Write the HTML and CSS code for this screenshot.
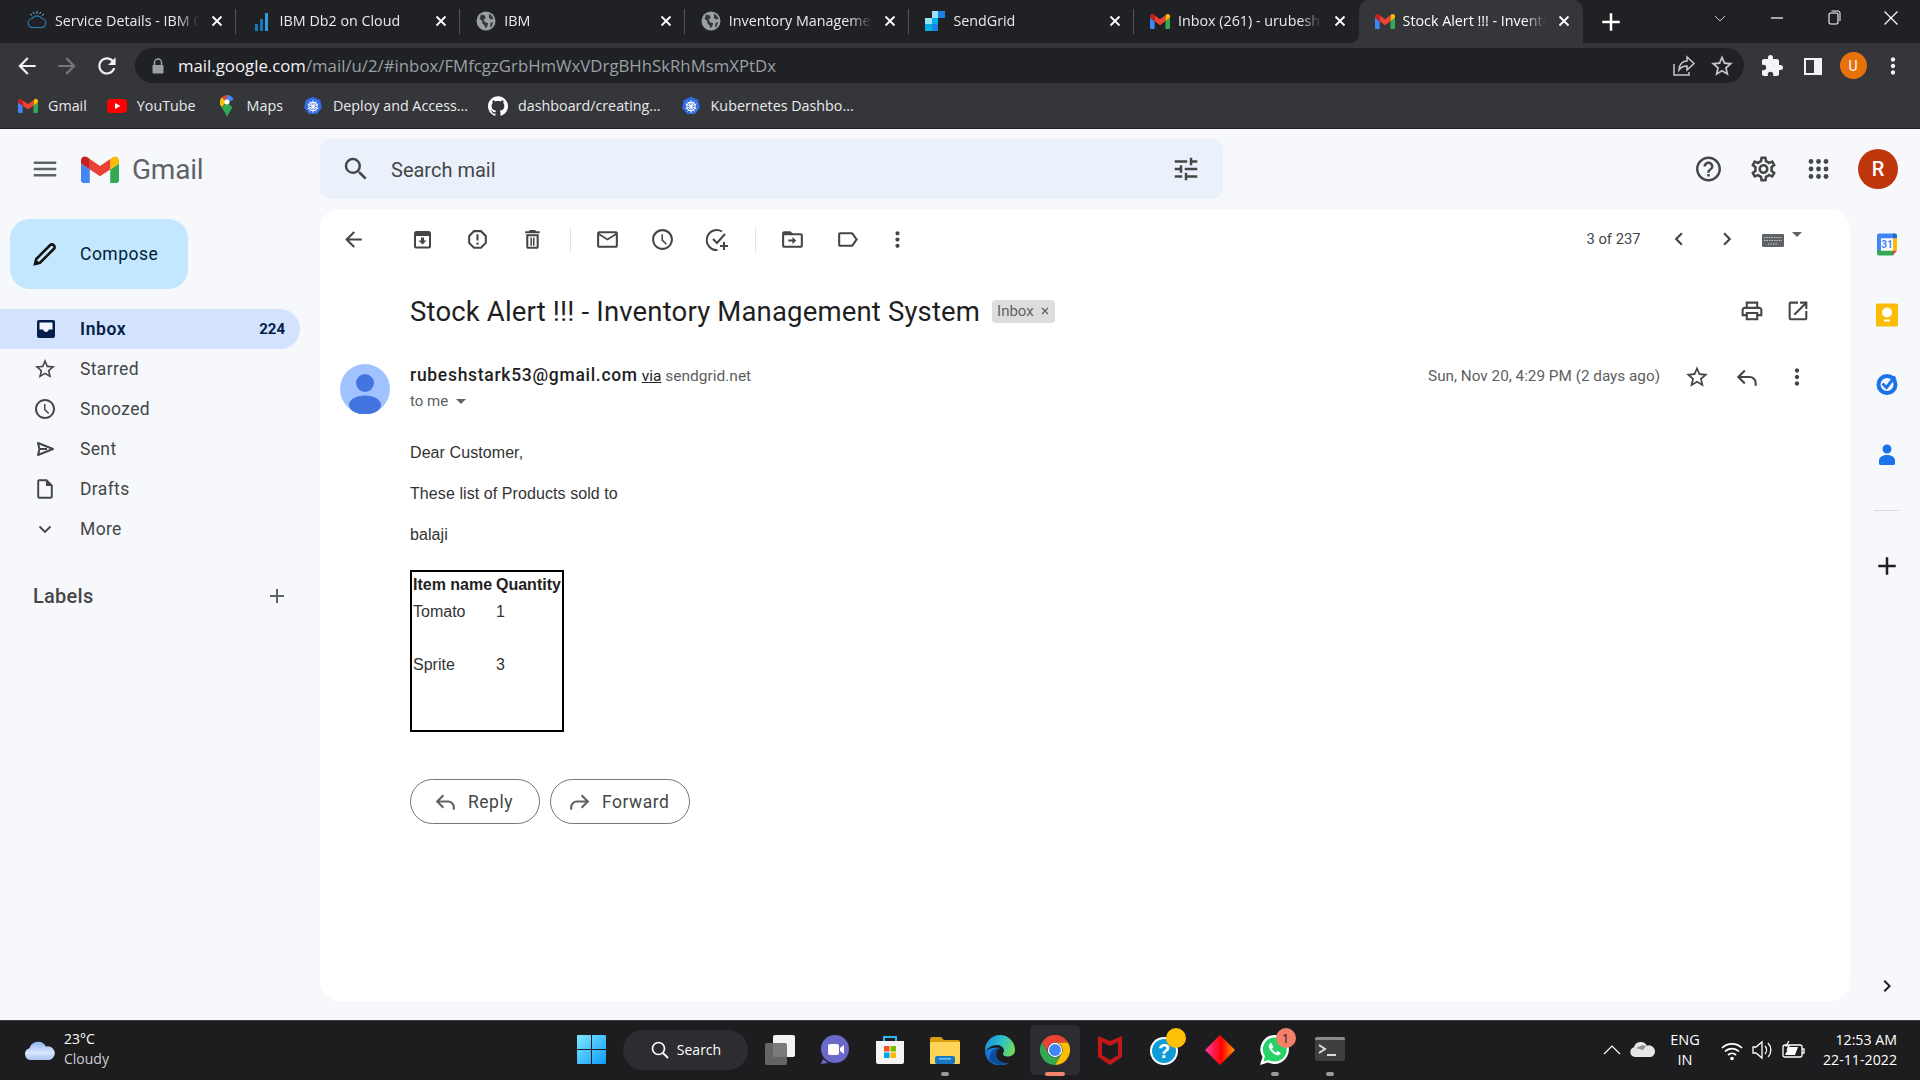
FILE: index.html
```html
<!DOCTYPE html>
<html lang="en">
<head>
<meta charset="utf-8">
<title>Stock Alert !!! - Inventory Management System</title>
<link rel="stylesheet" href="styles.css">
</head>
<body>
<svg class="defs" aria-hidden="true">
  <defs>
    <symbol id="m-logo" viewBox="0 0 52 42" preserveAspectRatio="none">
      <path fill="#4285f4" d="M3.6 42h8.4V21.6L0 12.6V38.4C0 40.4 1.6 42 3.6 42z"/>
      <path fill="#34a853" d="M40 42h8.4c2 0 3.6-1.6 3.6-3.6V12.6L40 21.6z"/>
      <path fill="#fbbc04" d="M40 6v15.6l12-9V7.8c0-4.4-5.1-7-8.6-4.3z"/>
      <path fill="#ea4335" d="M12 21.6V6l14 10.5L40 6v15.6L26 32z"/>
      <path fill="#c5221f" d="M0 7.8v4.8l12 9V6L8.6 3.5C5.1.8 0 3.4 0 7.8z"/>
    </symbol>
    <symbol id="close" viewBox="0 0 20 20"><path d="M5.5 5.5l9 9M14.5 5.5l-9 9" stroke="currentColor" stroke-width="1.8" fill="none"/></symbol>
    <symbol id="globe" viewBox="0 0 20 20"><circle cx="10" cy="10" r="9.5" fill="#9aa0a6"/><path fill="#35363a" d="M5 3.5l4 1 .5 2.5-2 2 2 2.5 2.5.5-.5 3-2 2.5-1-3-2-2-.5-3-2.5-1.500zM13 2.500l3 2.500 1.500 3-2.500.5-2-1.500zM14.500 12l2.500-1-1 4-2 1.500z"/></symbol>
    <symbol id="k8s" viewBox="0 0 24 24"><path fill="#326ce5" d="M12 .8l8.600 4.100 2.100 9.300-5.900 7.500H7.200l-5.900-7.500 2.100-9.300z"/><circle cx="12" cy="12.500" r="5" fill="none" stroke="#fff" stroke-width="1.300"/><path stroke="#fff" stroke-width="1.200" d="M12 5v15M5.500 9.500l13 6M18.500 9.500l-13 6M8 18.500l8-12M16 18.500l-8-12"/><circle cx="12" cy="12.500" r="1.400" fill="#fff"/></symbol>
    <symbol id="back" viewBox="0 0 24 24"><path fill="currentColor" d="M20 11H7.830l5.590-5.590L12 4l-8 8 8 8 1.410-1.410L7.830 13H20v-2z"/></symbol>
    <symbol id="forward" viewBox="0 0 24 24"><path fill="currentColor" d="M12 4l-1.410 1.410L16.170 11H4v2h12.170l-5.580 5.590L12 20l8-8z"/></symbol>
    <symbol id="star" viewBox="0 0 24 24"><path fill="currentColor" d="M22 9.240l-7.190-.62L12 2 9.190 8.630 2 9.240l5.460 4.730L5.820 21 12 17.270 18.180 21l-1.630-7.030L22 9.240zM12 15.400l-3.760 2.270 1-4.280-3.320-2.880 4.380-.38L12 6.100l1.710 4.040 4.380.38-3.320 2.880 1 4.280L12 15.400z"/></symbol>
    <symbol id="clock" viewBox="0 0 24 24"><path fill="currentColor" d="M11.990 2C6.470 2 2 6.480 2 12s4.470 10 9.990 10C17.520 22 22 17.520 22 12S17.520 2 11.990 2zM12 20c-4.420 0-8-3.580-8-8s3.580-8 8-8 8 3.580 8 8-3.580 8-8 8zm.500-13H11v6l4.250 4 1-1-3.750-3.670z"/></symbol>
    <symbol id="more" viewBox="0 0 24 24"><path fill="currentColor" d="M12 8c1.100 0 2-.9 2-2s-.9-2-2-2-2 .9-2 2 .9 2 2 2zm0 2c-1.100 0-2 .9-2 2s.9 2 2 2 2-.9 2-2-.9-2-2-2zm0 6c-1.100 0-2 .9-2 2s.9 2 2 2 2-.9 2-2-.9-2-2-2z"/></symbol>
    <symbol id="reply" viewBox="0 0 24 24"><path fill="none" stroke="currentColor" stroke-width="2" d="M10 6l-6 6 6 6M4 12h10.500a5.500 5.500 0 0 1 5.500 5.500V20"/></symbol>
    <symbol id="fwd" viewBox="0 0 24 24"><path fill="none" stroke="currentColor" stroke-width="2" d="M14 6l6 6-6 6M20 12H9.500A5.500 5.500 0 0 0 4 17.500V20"/></symbol>
    <symbol id="plus" viewBox="0 0 24 24"><path fill="currentColor" d="M19 13h-6v6h-2v-6H5v-2h6V5h2v6h6v2z"/></symbol>
  </defs>
</svg>

<div class="screen">
  <header class="tabstrip">
    <div class="tab">
      <svg class="tab-ico" viewBox="0 0 20 20"><path d="M5 7.500a6 6 0 0 1 10 0 4.500 4.500 0 0 1-1.500 9h-7A4.500 4.500 0 0 1 5 7.500z" fill="none" stroke="#2b7fb8" stroke-width="1.200"/><path d="M6 1l1.500 2M10 0v3M14 1l-1.500 2M3 3l2 1.500M17 3l-2 1.500" stroke="#5fb4e6" stroke-width="1"/></svg>
      <span class="tab-title">Service Details - IBM Cloud</span>
      <svg class="tab-close"><use href="#close"/></svg>
    </div>
    <div class="tab">
      <svg class="tab-ico" viewBox="0 0 20 20"><path fill="#1b75bb" d="M3 13h3v7H3zM8 8h3v12H8z"/><path fill="#2a9fd8" d="M13 2h3v18h-3z"/></svg>
      <span class="tab-title">IBM Db2 on Cloud</span>
      <svg class="tab-close"><use href="#close"/></svg>
    </div>
    <div class="tab">
      <svg class="tab-ico"><use href="#globe"/></svg>
      <span class="tab-title">IBM</span>
      <svg class="tab-close"><use href="#close"/></svg>
    </div>
    <div class="tab">
      <svg class="tab-ico"><use href="#globe"/></svg>
      <span class="tab-title">Inventory Management System</span>
      <svg class="tab-close"><use href="#close"/></svg>
    </div>
    <div class="tab">
      <svg class="tab-ico" viewBox="0 0 20 20"><path fill="#99e1f4" d="M0 7h7v6H0z"/><path fill="#1a82e2" d="M7 13h6v7H7zM13 0h7v7h-7z"/><path fill="#00b2e3" d="M7 7h6v6H7zM0 13h7v7H0z"/><path fill="#99e1f4" d="M7 0h6v7H7z"/></svg>
      <span class="tab-title">SendGrid</span>
      <svg class="tab-close"><use href="#close"/></svg>
    </div>
    <div class="tab before-active">
      <svg class="tab-ico tab-m"><use href="#m-logo"/></svg>
      <span class="tab-title">Inbox (261) - urubesh@gmail.com</span>
      <svg class="tab-close"><use href="#close"/></svg>
    </div>
    <div class="tab active">
      <svg class="tab-ico tab-m"><use href="#m-logo"/></svg>
      <span class="tab-title">Stock Alert !!! - Inventory Management</span>
      <svg class="tab-close"><use href="#close"/></svg>
    </div>
    <svg class="newtab"><use href="#plus"/></svg>
    <div class="winctl">
      <svg class="win-btn" viewBox="0 0 20 20"><path d="M5 8l5 5 5-5" fill="none" stroke="#c8c8c8" stroke-width="1"/></svg>
      <svg class="win-btn" viewBox="0 0 20 20"><path d="M4 10h12" stroke="#fff" stroke-width="1.200"/></svg>
      <svg class="win-btn" viewBox="0 0 20 20"><rect x="5" y="5" width="9" height="11" rx="1.500" fill="none" stroke="#fff" stroke-width="1.100"/><path d="M7.500 3H14a2 2 0 0 1 2 2v8" fill="none" stroke="#fff" stroke-width="1"/></svg>
      <svg class="win-btn" viewBox="0 0 20 20"><path d="M3.500 3.500l13 13M16.500 3.500l-13 13" stroke="#fff" stroke-width="1.200"/></svg>
    </div>
  </header>

  <nav class="toolbar">
    <svg class="tb-slot tb-white"><use href="#back" x="7" y="7" width="26" height="26"/></svg>
    <svg class="tb-slot tb-dim"><use href="#forward" x="7" y="7" width="26" height="26"/></svg>
    <svg class="tb-slot tb-white" viewBox="0 0 40 40"><path transform="translate(7 7) scale(1.080)" fill="currentColor" d="M17.650 6.350C16.200 4.900 14.210 4 12 4c-4.420 0-7.990 3.580-7.990 8s3.570 8 7.990 8c3.730 0 6.840-2.550 7.730-6h-2.080c-.82 2.330-3.040 4-5.650 4-3.310 0-6-2.690-6-6s2.690-6 6-6c1.660 0 3.140.69 4.220 1.780L13 11h7V4l-2.350 2.350z"/></svg>
    <div class="omnibox">
      <svg class="lock" viewBox="0 0 14 16"><path d="M3.500 7V4.500a3.500 3.500 0 0 1 7 0V7" fill="none" stroke="#9aa0a6" stroke-width="1.500"/><rect x="1.500" y="7" width="11" height="8.500" rx="1.200" fill="#9aa0a6"/></svg>
      <div class="url"><span class="url-host">mail.google.com</span>/mail/u/2/#inbox/FMfcgzGrbHmWxVDrgBHhSkRhMsmXPtDx</div>
      <svg class="tb-slot tb-grey" viewBox="0 0 40 40"><path d="M12 18v11h15v-3M17 24c0-6 4-9 8-9v-4l7 6.500-7 6.500v-4c-3 0-6 1-8 4z" fill="none" stroke="currentColor" stroke-width="1.500"/></svg>
      <svg class="tb-slot tb-grey"><use href="#star" x="7" y="7" width="26" height="26"/></svg>
    </div>
    <div class="tb-right">
      <svg class="tb-slot tb-white" viewBox="0 0 40 40"><path fill="currentColor" d="M27.500 19H26v-4c0-1.100-.9-2-2-2h-4v-1.500a2.500 2.500 0 0 0-5 0V13h-4c-1.100 0-2 .9-2 2v3.800h1.500a2.700 2.700 0 0 1 0 5.400H9V28c0 1.100.9 2 2 2h3.800v-1.500a2.700 2.700 0 0 1 5.400 0V30H24c1.100 0 2-.9 2-2v-4h1.500a2.500 2.500 0 0 0 0-5z"/></svg>
      <svg class="tb-slot tb-white" viewBox="0 0 40 40"><path fill="currentColor" fill-rule="evenodd" d="M11 12h18v17H11zM13 14v13h8V14z"/></svg>
      <div class="tb-avatar-slot"><div class="profile">U</div></div>
      <svg class="tb-slot tb-white"><use href="#more" x="7" y="7" width="26" height="26"/></svg>
    </div>
  </nav>

  <div class="bookmarks">
    <div class="bm"><svg class="bm-m"><use href="#m-logo"/></svg>Gmail</div>
    <div class="bm"><svg class="bm-ico" viewBox="0 0 20 20"><rect y="3" width="20" height="14" rx="4" fill="#f00"/><path d="M8 7l5.500 3L8 13z" fill="#fff"/></svg>YouTube</div>
    <div class="bm"><svg class="bm-pin" viewBox="0 0 14 22"><path fill="#34a853" d="M7 22C5.500 18 3 15 1.500 12L7 8l5.500 4C11 15 8.500 18 7 22z"/><path fill="#4285f4" d="M1 5L7 0a7 7 0 0 1 6.500 4.500L7 8z"/><path fill="#ea4335" d="M7 0A7 7 0 0 0 1.600 2.600L3.500 6 7 3z"/><path fill="#fbbc04" d="M1.600 2.600A7 7 0 0 0 1.500 12L7 7z"/><circle cx="7" cy="7" r="2.500" fill="#fff"/></svg>Maps</div>
    <div class="bm"><svg class="bm-ico"><use href="#k8s" width="20" height="20"/></svg>Deploy and Access...</div>
    <div class="bm"><svg class="bm-ico" viewBox="0 0 24 24"><path fill="#fff" d="M12 .297c-6.630 0-12 5.373-12 12 0 5.303 3.438 9.800 8.205 11.385.6.113.82-.258.82-.577 0-.285-.01-1.040-.015-2.040-3.338.724-4.042-1.610-4.042-1.610C4.422 18.070 3.633 17.700 3.633 17.700c-1.087-.744.084-.729.084-.729 1.205.084 1.838 1.236 1.838 1.236 1.070 1.835 2.809 1.305 3.495.998.108-.776.417-1.305.76-1.605-2.665-.3-5.466-1.332-5.466-5.930 0-1.310.465-2.380 1.235-3.220-.135-.303-.54-1.523.105-3.176 0 0 1.005-.322 3.300 1.230.96-.267 1.980-.399 3-.405 1.020.006 2.040.138 3 .405 2.280-1.552 3.285-1.230 3.285-1.230.645 1.653.24 2.873.12 3.176.765.84 1.230 1.910 1.230 3.220 0 4.610-2.805 5.625-5.475 5.920.42.36.81 1.096.81 2.220 0 1.606-.015 2.896-.015 3.286 0 .315.21.69.825.57C20.565 22.092 24 17.592 24 12.297c0-6.627-5.373-12-12-12"/></svg>dashboard/creating...</div>
    <div class="bm"><svg class="bm-ico"><use href="#k8s" width="20" height="20"/></svg>Kubernetes Dashbo...</div>
  </div>

  <div class="app">
    <aside class="sidebar">
      <div class="brand">
        <svg class="ico30 c-grey" viewBox="0 0 24 24"><path fill="currentColor" d="M3 18h18v-2H3v2zm0-5h18v-2H3v2zm0-7v2h18V6H3z"/></svg>
        <svg class="brand-m"><use href="#m-logo"/></svg>
        <span class="brand-name">Gmail</span>
      </div>
      <button class="compose">
        <svg class="ico30" viewBox="0 0 24 24"><path fill="none" stroke="#111" stroke-width="2" d="M4 20l1-4L16 5c1-1 2-1 3 0s1 2 0 3L8 19z"/><path d="M3.500 20.500l1-4.500 3.500 3.500z" fill="#111"/></svg>
        Compose
      </button>
      <ul class="navlist">
        <li class="navrow current">
          <svg class="ico30" viewBox="0 0 30 30"><rect x="7" y="6" width="18" height="18" rx="2" fill="#041e49"/><path fill="#f2f6fe" d="M9.500 8.500h13v7h-3.800c-.2 1.400-1.300 2.500-2.700 2.500s-2.500-1.100-2.700-2.500H9.500z"/></svg>
          <span class="navlabel">Inbox</span><span class="navcount">224</span>
        </li>
        <li class="navrow"><svg class="ico30"><use href="#star" x="3" y="3" width="24" height="24"/></svg><span class="navlabel">Starred</span></li>
        <li class="navrow"><svg class="ico30"><use href="#clock" x="3" y="3" width="24" height="24"/></svg><span class="navlabel">Snoozed</span></li>
        <li class="navrow"><svg class="ico30" viewBox="0 0 30 30"><path fill="none" stroke="currentColor" stroke-width="2" stroke-linejoin="round" d="M8 9l15 6-15 6 1.500-6zM9.500 15H17"/></svg><span class="navlabel">Sent</span></li>
        <li class="navrow"><svg class="ico30" viewBox="0 0 24 24"><path fill="currentColor" transform="translate(2.700 2.700) scale(.775)" d="M14 2H6c-1.100 0-1.990.9-1.990 2L4 20c0 1.100.89 2 1.990 2H18c1.100 0 2-.9 2-2V8l-6-6zM6 20V4h7v5h5v11H6z"/></svg><span class="navlabel">Drafts</span></li>
        <li class="navrow"><svg class="ico30" viewBox="0 0 30 30"><path fill="none" stroke="currentColor" stroke-width="1.800" d="M9.500 12.500l5.500 5.500 5.500-5.500"/></svg><span class="navlabel">More</span></li>
      </ul>
      <div class="labels"><span>Labels</span><svg class="ico30 c-grey"><use href="#plus" x="3" y="3" width="24" height="24"/></svg></div>
    </aside>

    <div class="content">
      <div class="topbar">
        <div class="search">
          <svg class="ico30 c-dark" viewBox="0 0 24 24"><path fill="currentColor" d="M15.500 14h-.79l-.28-.27A6.471 6.471 0 0 0 16 9.500 6.500 6.500 0 1 0 9.500 16c1.610 0 3.090-.59 4.230-1.570l.27.28v.79l5 4.990L20.490 19l-4.990-5zm-6 0C7.010 14 5 11.990 5 9.500S7.010 5 9.500 5 14 7.010 14 9.500 11.990 14 9.500 14z"/></svg>
          <span class="search-text">Search mail</span>
          <svg class="ico30 c-dark tune" viewBox="0 0 24 24"><path fill="currentColor" d="M3 17v2h6v-2H3zM3 5v2h10V5H3zm10 16v-2h8v-2h-8v-2h-2v6h2zM7 9v2H3v2h4v2h2V9H7zm14 4v-2H11v2h10zm-6-4h2V7h4V5h-4V3h-2v6z"/></svg>
        </div>
        <div class="top-actions">
          <svg class="slot55 c-grey" viewBox="0 0 55 30"><path transform="translate(12.500 0) scale(1.250)" fill="currentColor" d="M11 18h2v-2h-2v2zm1-16C6.480 2 2 6.480 2 12s4.480 10 10 10 10-4.480 10-10S17.520 2 12 2zm0 18c-4.410 0-8-3.590-8-8s3.590-8 8-8 8 3.590 8 8-3.590 8-8 8zm0-14c-2.210 0-4 1.790-4 4h2c0-1.100.9-2 2-2s2 .9 2 2c0 2-3 1.750-3 5h2c0-2.250 3-2.500 3-5 0-2.210-1.790-4-4-4z"/></svg>
          <svg class="slot55 c-grey" viewBox="0 0 55 30"><path transform="translate(12.500 0) scale(1.250)" fill="currentColor" d="M19.430 12.980c.04-.32.07-.64.07-.98 0-.34-.03-.66-.07-.98l2.110-1.650c.19-.15.24-.42.12-.64l-2-3.460c-.09-.16-.26-.25-.44-.25-.06 0-.12.01-.17.03l-2.490 1c-.52-.4-1.080-.73-1.690-.98l-.38-2.650C14.460 2.180 14.250 2 14 2h-4c-.25 0-.46.18-.49.42l-.38 2.650c-.61.25-1.170.59-1.690.98l-2.490-1c-.06-.02-.12-.03-.18-.03-.17 0-.34.09-.43.25l-2 3.460c-.13.22-.07.49.12.64l2.110 1.650c-.04.32-.07.65-.07.98 0 .33.03.66.07.98l-2.110 1.650c-.19.15-.24.42-.12.64l2 3.460c.09.16.26.25.44.25.06 0 .12-.01.17-.03l2.490-1c.52.4 1.080.73 1.690.98l.38 2.650c.03.24.24.42.49.42h4c.25 0 .46-.18.49-.42l.38-2.650c.61-.25 1.170-.59 1.690-.98l2.490 1c.06.02.12.03.18.03.17 0 .34-.09.43-.25l2-3.460c.12-.22.07-.49-.12-.64l-2.110-1.650zm-1.980-1.710c.04.31.05.52.05.73 0 .21-.02.43-.05.73l-.14 1.130.89.7 1.080.84-.7 1.210-1.270-.51-1.040-.42-.9.68c-.43.32-.84.56-1.250.73l-1.060.43-.16 1.130-.2 1.350h-1.400l-.19-1.350-.16-1.130-1.060-.43c-.43-.18-.83-.41-1.230-.71l-.91-.7-1.060.43-1.270.51-.7-1.210 1.080-.84.89-.7-.14-1.130c-.03-.31-.05-.54-.05-.74s.02-.43.05-.73l.14-1.130-.89-.7-1.080-.84.7-1.210 1.270.51 1.040.42.9-.68c.43-.32.84-.56 1.250-.73l1.060-.43.16-1.130.2-1.350h1.390l.19 1.350.16 1.130 1.060.43c.43.18.83.41 1.230.71l.91.7 1.060-.43 1.270-.51.7 1.210-1.070.85-.89.7.14 1.130zM12 8c-2.210 0-4 1.790-4 4s1.790 4 4 4 4-1.790 4-4-1.790-4-4-4zm0 6c-1.100 0-2-.9-2-2s.9-2 2-2 2 .9 2 2-.9 2-2 2z"/></svg>
          <svg class="slot55 c-grey" viewBox="0 0 55 30"><g fill="currentColor"><circle cx="20" cy="7.500" r="2.400"/><circle cx="27.500" cy="7.500" r="2.400"/><circle cx="35" cy="7.500" r="2.400"/><circle cx="20" cy="15" r="2.400"/><circle cx="27.500" cy="15" r="2.400"/><circle cx="35" cy="15" r="2.400"/><circle cx="20" cy="22.500" r="2.400"/><circle cx="27.500" cy="22.500" r="2.400"/><circle cx="35" cy="22.500" r="2.400"/></g></svg>
          <div class="account">R</div>
        </div>
      </div>

      <div class="below">
        <main class="card">
          <div class="mail-tools">
            <svg class="slot55 back-slot"><use href="#back" x="15" y="3" width="25" height="25"/></svg>
            <svg class="slot55 first-slot" viewBox="0 0 55 30"><path fill="currentColor" d="M19 12V9.500A2.500 2.500 0 0 1 21.500 7h12A2.500 2.500 0 0 1 36 9.500V12z"/><rect x="20" y="10" width="15" height="13.500" rx="1" fill="none" stroke="currentColor" stroke-width="2"/><path fill="currentColor" d="M26 13.500h3v3h2.500l-4 4-4-4H26z"/></svg>
            <svg class="slot55" viewBox="0 0 55 30"><path transform="translate(15 3) scale(1.040)" fill="currentColor" fill-rule="evenodd" d="M15.730 3H8.270L3 8.270v7.460L8.270 21h7.460L21 15.730V8.270L15.730 3zM19 14.900L14.900 19H9.100L5 14.900V9.100L9.100 5h5.800L19 9.100v5.800zM11 7h2v6h-2zM11 15h2v2h-2z"/></svg>
            <svg class="slot55" viewBox="0 0 55 30"><path transform="translate(15 3) scale(1.040)" fill="currentColor" d="M16 9v10H8V9h8m-1.500-6h-5l-1 1H5v2h14V4h-3.500l-1-1zM18 7H6v12c0 1.100.9 2 2 2h8c1.100 0 2-.9 2-2V7zM10 10h1.500v8H10zM12.500 10H14v8h-1.500z"/></svg>
            <span class="tool-sep"></span>
            <svg class="slot55" viewBox="0 0 55 30"><path transform="translate(15 3) scale(1.040)" fill="currentColor" d="M20 4H4c-1.100 0-1.990.9-1.990 2L2 18c0 1.100.9 2 2 2h16c1.100 0 2-.9 2-2V6c0-1.100-.9-2-2-2zm0 14H4V8l8 5 8-5v10zm-8-7L4 6h16l-8 5z"/></svg>
            <svg class="slot55"><use href="#clock" x="15" y="3" width="25" height="25"/></svg>
            <svg class="slot55" viewBox="0 0 55 30"><g transform="translate(15 3)" fill="none" stroke="currentColor" stroke-width="2"><path d="M17 4.500A10 10 0 1 0 12.500 23"/><path d="M8 12l4 4 8-9M19 15v8M15 19h8"/></g></svg>
            <span class="tool-sep"></span>
            <svg class="slot55" viewBox="0 0 55 30"><path transform="translate(15 3) scale(1.040)" fill="currentColor" d="M20 6h-8l-2-2H4c-1.100 0-2 .9-2 2v12c0 1.100.9 2 2 2h16c1.100 0 2-.9 2-2V8c0-1.100-.9-2-2-2zm0 12H4V8h16v10zM12 9.500l3.500 3.500-3.500 3.500V14H8v-2h4z"/></svg>
            <svg class="slot55" viewBox="0 0 55 30"><path transform="translate(15 3) scale(1.040)" fill="currentColor" d="M17.630 5.840C17.270 5.330 16.670 5 16 5L5 5.010C3.900 5.010 3 5.900 3 7v10c0 1.100.9 1.990 2 1.990L16 19c.67 0 1.270-.33 1.630-.84L22 12l-4.370-6.160zM16 17H5V7h11l3.550 5L16 17z"/></svg>
            <svg class="slot45"><use href="#more" x="10" y="3" width="25" height="25"/></svg>
            <div class="pager">
              <span class="pager-text">3 of 237</span>
              <svg class="slot48" viewBox="0 0 48 30"><path transform="translate(11 2) scale(1.080)" fill="currentColor" d="M15.410 7.410L14 6l-6 6 6 6 1.410-1.410L10.830 12z"/></svg>
              <svg class="slot48" viewBox="0 0 48 30"><path transform="translate(11 2) scale(1.080)" fill="currentColor" d="M10 6L8.590 7.410 13.170 12l-4.580 4.590L10 18l6-6z"/></svg>
              <svg class="kbd" viewBox="0 0 46 30"><rect x="1" y="10" width="22" height="13" rx="1" fill="#5f6368"/><path d="M3 13.500h18M3 16.500h18M7 20h10" stroke="#c4c7c5" stroke-width="1.200" stroke-dasharray="1.500 1"/><path d="M31 8h10l-5 5z" fill="#5f6368"/></svg>
            </div>
          </div>

          <div class="subject-row">
            <h1 class="subject">Stock Alert !!! - Inventory Management System</h1>
            <span class="chip">Inbox<svg class="chip-x" viewBox="0 0 10 10"><path d="M2 2l6 6M8 2l-6 6" stroke="#5f6368" stroke-width="1.300"/></svg></span>
            <div class="subject-actions">
              <svg class="slot46" viewBox="0 0 46 30"><path transform="translate(10.500 2.500) scale(1.040)" fill="currentColor" d="M19 8h-1V3H6v5H5c-1.660 0-3 1.340-3 3v6h4v4h12v-4h4v-6c0-1.660-1.340-3-3-3zM8 5h8v3H8V5zm8 12v2H8v-4h8v2zm2-2v-2H6v2H4v-4c0-.55.45-1 1-1h14c.55 0 1 .45 1 1v4h-2z"/></svg>
              <svg class="slot46" viewBox="0 0 46 30"><path transform="translate(10.500 2.500) scale(1.040)" fill="currentColor" d="M19 19H5V5h7V3H5a2 2 0 0 0-2 2v14a2 2 0 0 0 2 2h14c1.100 0 2-.9 2-2v-7h-2v7zM14 3v2h3.590l-9.830 9.830 1.410 1.410L19 6.410V10h2V3h-7z"/></svg>
            </div>
          </div>

          <div class="msg-head">
            <svg class="sender-pic" viewBox="0 0 50 50"><circle cx="25" cy="25" r="25" fill="#a0c3ff"/><circle cx="25" cy="19" r="9" fill="#4374e0"/><ellipse cx="25" cy="41" rx="16" ry="9.500" fill="#4374e0"/></svg>
            <div class="sender">
              <div class="sender-line"><b class="sender-name">rubeshstark53@gmail.com</b> <u class="via">via</u> <span class="via-host">sendgrid.net</span></div>
              <div class="to-line">to me<span class="to-caret"></span></div>
            </div>
            <div class="msg-meta">
              <span class="msg-date">Sun, Nov 20, 4:29 PM (2 days ago)</span>
              <svg class="slot50"><use href="#star" x="12" y="3" width="26" height="26"/></svg>
              <svg class="slot50"><use href="#reply" x="12" y="3" width="26" height="26"/></svg>
              <svg class="slot50"><use href="#more" x="12" y="3" width="26" height="26"/></svg>
            </div>
          </div>

          <div class="msg-body">
            <p>Dear Customer,</p>
            <p>These list of Products sold to</p>
            <p>balaji</p>
            <table class="items">
              <tr class="r-head"><th>Item name</th><th>Quantity</th></tr>
              <tr class="r-one"><td>Tomato</td><td>1</td></tr>
              <tr class="r-two"><td>Sprite</td><td>3</td></tr>
            </table>
            <div class="actions">
              <button class="pill pill-reply"><svg class="pill-ico"><use href="#reply" width="25" height="25"/></svg>Reply</button>
              <button class="pill pill-forward"><svg class="pill-ico"><use href="#fwd" width="25" height="25"/></svg>Forward</button>
            </div>
          </div>
        </main>

        <aside class="rail">
          <div class="rail-slot"><svg class="rail-ico" viewBox="0 0 24 24"><path fill="#4285f4" d="M2 3a2 2 0 0 1 2-2h15v5H6v16H4a2 2 0 0 1-2-2z"/><path fill="#1967d2" d="M18 1h2a2 2 0 0 1 2 2v3h-4z"/><path fill="#fbbc04" d="M18 6h4v12h-4z"/><path fill="#34a853" d="M6 18h12v5H4a2 2 0 0 1-2-2v-3z"/><path fill="#ea4335" d="M18 18h4l-4 5z"/><rect x="6" y="6" width="12" height="12" fill="#fff"/><text x="12" y="15.500" class="cal-num">31</text></svg></div>
          <div class="rail-slot"><svg class="rail-ico" viewBox="0 0 24 24"><rect x="1" y="1" width="22" height="23" rx="1.500" fill="#fbbc04"/><circle cx="12" cy="10" r="5" fill="#fff"/><path d="M9 17h6v2H9z" fill="#fff"/></svg></div>
          <div class="rail-slot"><svg class="rail-ico" viewBox="0 0 24 24"><circle cx="12" cy="12" r="8.500" fill="none" stroke="#1a73e8" stroke-width="4"/><path d="M7.500 11l4 4L20 4" fill="none" stroke="#1a73e8" stroke-width="3"/></svg></div>
          <div class="rail-slot"><svg class="rail-ico" viewBox="0 0 24 24"><circle cx="12" cy="6.500" r="4.500" fill="#1a73e8"/><path d="M4 21v-3c0-3 3-5.500 8-5.500s8 2.500 8 5.500v3c0 1-1 1.500-2 1.500H6c-1 0-2-.5-2-1.500z" fill="#1a73e8"/></svg></div>
          <span class="rail-sep"></span>
          <svg class="rail-plus"><use href="#plus" width="30" height="30"/></svg>
          <svg class="rail-chev" viewBox="0 0 24 24"><path fill="currentColor" d="M10 6L8.590 7.410 13.170 12l-4.580 4.590L10 18l6-6z"/></svg>
        </aside>
      </div>
    </div>
  </div>

  <footer class="taskbar">
    <div class="weather">
      <svg class="cloud" viewBox="0 0 32 24"><defs><linearGradient id="cl" x1="0" y1="0" x2="0" y2="1"><stop offset="0" stop-color="#8fb4ee"/><stop offset=".6" stop-color="#d9e6fb"/><stop offset="1" stop-color="#a9c5f2"/></linearGradient></defs><path fill="url(#cl)" d="M7 22a6 6 0 0 1-1.500-11.800A9 9 0 0 1 22 8.500 6.800 6.800 0 0 1 25.500 22z"/></svg>
      <div class="weather-text"><div>23°C</div><div class="weather-sub">Cloudy</div></div>
    </div>
    <div class="tasks">
      <svg class="winlogo" viewBox="0 0 29 29"><defs><linearGradient id="wl" x1="0" y1="0" x2="1" y2="1"><stop offset="0" stop-color="#7ee8ff"/><stop offset="1" stop-color="#0f9bff"/></linearGradient></defs><path fill="url(#wl)" d="M0 1a1 1 0 0 1 1-1h13v14H0zM15 0h13a1 1 0 0 1 1 1v13H15zM0 15h14v14H1a1 1 0 0 1-1-1zM15 15h14v13a1 1 0 0 1-1 1H15z"/></svg>
      <div class="task-search">
        <svg class="ts-ico" viewBox="0 0 20 20"><circle cx="8.500" cy="8.500" r="6" fill="none" stroke="#fff" stroke-width="1.700"/><path d="M13 13l5 5" stroke="#fff" stroke-width="1.900"/></svg>
        Search
      </div>
      <div class="app-slot"><svg class="app-ico" viewBox="0 0 30 30"><rect x="8" y="0" width="22" height="22" rx="2" fill="#f4f4f4"/><rect x="0" y="8" width="22" height="22" rx="2" fill="#6d6d6d" opacity=".9"/></svg></div>
      <div class="app-slot"><svg class="app-ico" viewBox="0 0 30 30"><circle cx="15" cy="14" r="14" fill="#6b69c9"/><path d="M3 24l-2 5 7-1z" fill="#6b69c9"/><rect x="8" y="9" width="11" height="11" rx="2" fill="#fff"/><path d="M20 13l4-3v9l-4-3z" fill="#fff"/></svg></div>
      <div class="app-slot"><svg class="app-ico" viewBox="0 0 30 30"><path d="M9 6V2h12v4" fill="none" stroke="#2ab8f2" stroke-width="2"/><path d="M1 6h28v21a2 2 0 0 1-2 2H3a2 2 0 0 1-2-2z" fill="#f4f4f4"/><path fill="#f25022" d="M9 11h5.500v5.500H9z"/><path fill="#7fba00" d="M15.500 11H21v5.500h-5.500z"/><path fill="#00a4ef" d="M9 17.500h5.500V23H9z"/><path fill="#ffb900" d="M15.500 17.500H21V23h-5.500z"/></svg></div>
      <div class="app-slot dot"><svg class="app-ico" viewBox="0 0 30 30"><path d="M0 4a2 2 0 0 1 2-2h9l3 3h14a2 2 0 0 1 2 2v3H0z" fill="#d99e0b"/><path d="M0 7h30v21a1 1 0 0 1-1 1H1a1 1 0 0 1-1-1z" fill="#ffd456"/><rect x="5" y="21" width="20" height="8" rx="2" fill="#1578c2"/><rect x="9" y="23" width="12" height="1.500" fill="#7fc4f0"/></svg></div>
      <div class="app-slot"><svg class="app-ico" viewBox="0 0 30 30"><defs><linearGradient id="eg" x1="0" y1=".3" x2="1" y2=".6"><stop offset="0" stop-color="#1b8fe0"/><stop offset=".55" stop-color="#2cc4c8"/><stop offset="1" stop-color="#74dc54"/></linearGradient></defs><path fill="url(#eg)" d="M15 0a15 15 0 0 1 15 15c0 4-3 6.500-7.500 6.500-2.500 0-4.500-.8-4.500-2.500 0-1 1-1.500 1-3.500 0-3-3-5.500-7-5.500-5 0-9.500 3-12 6A15 15 0 0 1 15 0z"/><path fill="#1976d2" d="M0 16a15 15 0 0 0 24 11.500c-7 2-13-2-13-8 0-3 1.500-5.500 4-6.500-7-1-12.500.5-15 3z"/><path fill="#0b4f9c" d="M4 24a15 15 0 0 0 20 3.500c-7 2-13-2-13-8 0-3 1.500-5.500 4-6.500-5 0-10 3-11 11z"/></svg></div>
      <div class="app-slot active-app"><svg class="app-ico" viewBox="0 0 48 48"><path fill="#ea4335" d="M3.200 12A24 24 0 0 1 44.800 12H24A12 12 0 0 0 13.600 30z"/><path fill="#fbbc04" d="M44.800 12A24 24 0 0 1 24 48L34.400 30A12 12 0 0 0 24 12z"/><path fill="#34a853" d="M24 48A24 24 0 0 1 3.200 12L13.600 30A12 12 0 0 0 34.400 30z"/><circle cx="24" cy="24" r="11.500" fill="#fff"/><circle cx="24" cy="24" r="9.500" fill="#4285f4"/></svg></div>
      <div class="app-slot"><svg class="app-ico" viewBox="0 0 30 30"><path fill="#c01818" fill-rule="evenodd" d="M3 1l12 5 12-5v21l-12 8-12-8zM7 7v13l8 5 8-5V7l-8 4z"/></svg></div>
      <div class="app-slot"><svg class="app-ico" viewBox="0 0 30 30"><circle cx="14" cy="16" r="14" fill="#fff"/><circle cx="14" cy="16" r="12" fill="#0f9bd7"/><text x="14" y="23" class="help-q">?</text></svg><span class="badge-yellow"></span></div>
      <div class="app-slot"><svg class="app-ico" viewBox="0 0 30 30"><defs><linearGradient id="dm" x1="0" y1="0" x2="1" y2="0"><stop offset="0" stop-color="#ff3ca6"/><stop offset=".55" stop-color="#f00"/><stop offset="1" stop-color="#ffa000"/></linearGradient></defs><path fill="url(#dm)" d="M15 0l15 15-15 15L0 15z"/></svg></div>
      <div class="app-slot dot"><svg class="app-ico" viewBox="0 0 30 30"><path fill="#fff" d="M15 0a14.500 14.500 0 0 0-12.500 22L0 30l8-2.500A14.500 14.500 0 1 0 15 0z"/><path fill="#25d366" d="M15 2.500a12 12 0 0 0-10 18.700L3.500 26.500l5.400-1.500A12 12 0 1 0 15 2.500z"/><path fill="#fff" d="M10.500 8c-1 .3-2 2-1.700 3.800.5 3 4.500 7.500 8 8.500 2 .5 3.700-1 4-2.300l-3.300-2-1.500 1.500c-1.500-.5-3.500-2.500-4-4l1.300-1.500L11.500 8z"/></svg><span class="badge-red">1</span></div>
      <div class="app-slot dot"><svg class="app-ico" viewBox="0 0 30 30"><rect y="2" width="30" height="24" rx="2" fill="#3f3f3f"/><path d="M0 4a2 2 0 0 1 2-2h26a2 2 0 0 1 2 2v1H0z" fill="#8a8a8a"/><path d="M4 10l6 4-6 4" fill="none" stroke="#ddd" stroke-width="2"/><path d="M12 19h9v2h-9z" fill="#ddd"/></svg></div>
    </div>
    <div class="tray">
      <svg class="tray-slot" viewBox="0 0 30 30"><path d="M7 19l8-8 8 8" fill="none" stroke="#fff" stroke-width="1.200"/></svg>
      <svg class="tray-slot" viewBox="0 0 30 30"><path fill="#e6e6e6" d="M8 22a5 5 0 0 1-1-9.800 7 7 0 0 1 13-1.500A5.800 5.800 0 0 1 24 22z"/><path fill="#8f8f8f" d="M9 13l7-3 3 1-3 4z"/></svg>
      <div class="lang"><div>ENG</div><div>IN</div></div>
      <svg class="tray-slot wifi" viewBox="0 0 30 30"><g fill="none" stroke="#fff" stroke-width="1.700"><path d="M5 13a14 14 0 0 1 20 0M8 16.500a10 10 0 0 1 14 0M11 20a6 6 0 0 1 8 0"/></g><circle cx="15" cy="23.500" r="1.800" fill="#fff"/></svg>
      <svg class="tray-slot" viewBox="0 0 30 30"><g fill="none" stroke="#fff" stroke-width="1.300"><path d="M6 12v6h3l6 5V7l-6 5z"/><path d="M18 11a6 6 0 0 1 0 8M21 8a10 10 0 0 1 0 14"/></g></svg>
      <svg class="tray-slot" viewBox="0 0 30 30"><g fill="none" stroke="#fff" stroke-width="1.300"><rect x="6" y="10" width="19" height="12" rx="2"/><path d="M25 14h2v4h-2"/></g><path d="M8 20l4-8h9l-3 8z" fill="#fff"/><path d="M12 6l-3 5h3l-2 4" fill="none" stroke="#fff" stroke-width="1.200"/></svg>
      <div class="clock"><div>12:53 AM</div><div>22-11-2022</div></div>
    </div>
  </footer>
</div>
</body>
</html>
```

FILE: styles.css
```css
* { box-sizing: border-box; }
html, body { margin: 0; padding: 0; height: 100%; }
body { font-family: Roboto, "Liberation Sans", sans-serif; background: #f6f8fc; overflow: hidden; }
.defs { width: 0; height: 0; position: absolute; }
.screen { width: 1920px; height: 1080px; display: flex; flex-direction: column; overflow: hidden; }

/* Browser tabs */
.tabstrip { height: 43px; background: #202124; display: flex; padding-left: 11px; color: #fff; flex: none; }
.tab { width: 224.6px; height: 43px; flex: none; display: flex; align-items: center; padding: 0 9px 2px 16px; gap: 8px; position: relative; font-family: "Open Sans", sans-serif; font-size: 14.300px; color: #e8eaed; }
.tab::after { content: ""; position: absolute; right: 0; top: 9px; height: 25px; width: 1px; background: #55565a; }
.tab.before-active::after, .tab.active::after { display: none; }
.tab.active { background: #35363a; border-radius: 10px 10px 0 0; color: #fff; }
.tab.active::before { content: ""; position: absolute; left: -10px; bottom: 0; width: 10px; height: 10px; background: radial-gradient(circle at 0 0, transparent 10px, #35363a 10.5px); }
.tab-ico { width: 20px; height: 20px; flex: none; }
.tab-m { height: 16px; }
.tab-title { flex: 1; min-width: 0; white-space: nowrap; overflow: hidden; -webkit-mask-image: linear-gradient(to left, transparent 0, #000 22px); mask-image: linear-gradient(to left, transparent 0, #000 22px); }
.tab-close { width: 20px; height: 20px; flex: none; color: #fff; }
.newtab { width: 30px; height: 30px; color: #fff; margin: 7px 0 0 13px; flex: none; }
.winctl { margin-left: auto; display: flex; padding-right: 1px; align-items: flex-start; }
.win-btn { width: 20px; height: 20px; margin: 8px 18.500px 0; flex: none; }

/* Browser toolbar */
.toolbar { height: 40px; background: #35363a; display: flex; padding: 5px 7px 0; flex: none; align-items: flex-start; }
.tb-slot { width: 40px; height: 35px; flex: none; }
.toolbar > .tb-slot, .tb-right .tb-slot { height: 40px; margin-top: -2px; }
.tb-white { color: #f1f3f4; }
.tb-dim { color: #75777b; }
.tb-grey { color: #c4c7c5; }
.omnibox { flex: 1; height: 35px; margin-left: 8px; background: #202124; border-radius: 18px; display: flex; align-items: center; padding: 0 2px 0 16px; }
.omnibox .tb-slot { height: 40px; }
.lock { width: 14px; height: 16px; flex: none; margin-right: 13px; }
.url { flex: 1; font-family: "Open Sans", sans-serif; font-size: 16.800px; color: #9aa0a6; white-space: nowrap; }
.url-host { color: #f1f3f4; }
.tb-right { display: flex; margin-left: 9px; }
.tb-avatar-slot { width: 40px; height: 35px; display: flex; align-items: center; justify-content: center; }
.profile { width: 27px; height: 27px; border-radius: 50%; background: #e8710a; color: #fff; display: flex; align-items: center; justify-content: center; font-size: 14px; }

/* Bookmarks */
.bookmarks { height: 46px; background: #35363a; border-bottom: 1px solid #202124; display: flex; align-items: center; padding: 0 0 0 18px; gap: 20px; flex: none; font-family: "Open Sans", sans-serif; font-size: 14.300px; color: #e8eaed; }
.bm { display: flex; align-items: center; gap: 10px; white-space: nowrap; }
.bm-ico { width: 20px; height: 20px; flex: none; }
.bm-m { width: 20px; height: 15px; flex: none; }
.bm-pin { width: 14px; height: 22px; flex: none; margin: 0 3px 0 4px; }

/* App */
.app { flex: 1; min-height: 0; display: flex; background: #f6f8fc; }
.sidebar { width: 320px; flex: none; }
.brand { height: 80px; display: flex; align-items: center; padding-left: 30px; }
.ico30 { width: 30px; height: 30px; flex: none; color: #444746; }
.c-grey { color: #5f6368; }
.c-dark { color: #444746; }
.brand-m { width: 38px; height: 28px; margin-left: 21px; flex: none; }
.brand-name { margin-left: 13px; font-size: 28px; color: #5f6368; letter-spacing: -.2px; }
.compose { width: 178px; height: 70px; margin: 10px 0 0 10px; border: 0; border-radius: 20px; background: #c2e7ff; display: flex; align-items: center; padding: 0 0 0 20px; gap: 20px; font: 400 17.500px Roboto, sans-serif; letter-spacing: .5px; color: #001d35; }
.navlist { list-style: none; margin: 20px 0 0; padding: 0; }
.navrow { width: 300px; height: 40px; display: flex; align-items: center; padding: 0 15px 0 30px; gap: 20px; font-size: 17.500px; letter-spacing: .35px; color: #444746; border-radius: 0 20px 20px 0; }
.navrow.current { background: #d3e3fd; color: #041e49; font-weight: 600; letter-spacing: .6px; }
.navlabel { flex: 1; }
.navcount { font-size: 15px; font-weight: 700; letter-spacing: 0; }
.labels { display: flex; align-items: center; justify-content: space-between; width: 292px; padding-left: 33px; margin-top: 32px; font-size: 20px; font-weight: 500; letter-spacing: .25px; color: #444746; height: 30px; }

.content { flex: 1; min-width: 0; display: flex; flex-direction: column; }
.topbar { height: 80px; flex: none; display: flex; align-items: center; padding-right: 22px; }
.search { width: 903px; height: 60px; background: #eaf1fb; border-radius: 10px; display: flex; align-items: center; padding: 0 22px 0 21px; gap: 20px; }
.search-text { flex: 1; font-size: 20px; color: #444746; margin-top: 2px; }
.top-actions { margin-left: auto; display: flex; align-items: center; }
.slot55 { width: 55px; height: 30px; flex: none; color: #444746; }
.account { width: 40px; height: 40px; border-radius: 50%; background: #bf360c; color: #fff; margin-left: 12.500px; display: flex; align-items: center; justify-content: center; font-size: 20px; font-weight: 500; }

.below { flex: 1; min-height: 0; display: flex; }
.card { flex: 1; min-width: 0; height: 792px; background: #fff; border-radius: 20px; color: #222; }
.mail-tools { height: 60px; display: flex; align-items: center; padding-left: 5.500px; }
.mail-tools svg { color: #444746; }
.back-slot { margin-right: 14px; }
.tool-sep { width: 1px; height: 25px; background: #e3e3e3; margin: 0 9px 0 10px; flex: none; }
.slot45 { width: 45px; height: 30px; flex: none; }
.pager { margin-left: auto; display: flex; align-items: center; padding-right: 43px; }
.pager-text { font-size: 14.800px; color: #444746; margin-right: 14px; }
.slot48 { width: 48px; height: 30px; flex: none; }
.kbd { width: 46px; height: 30px; flex: none; margin-left: 10.400px; }
.subject-row { height: 84px; display: flex; align-items: center; padding: 0 29px 0 90px; }
.subject { margin: 0; font-size: 27.500px; font-weight: 400; letter-spacing: .16px; color: #1f1f1f; white-space: nowrap; }
.chip { height: 23px; margin-left: 12px; padding: 0 5px 0 5px; background: #ddd; border-radius: 4px; display: flex; align-items: center; gap: 6px; font-size: 15px; color: #5f6368; }
.chip-x { width: 10px; height: 10px; }
.subject-actions { margin-left: auto; display: flex; }
.slot46 { width: 46px; height: 30px; color: #444746; flex: none; }
.msg-head { display: flex; padding: 11px 28px 0 20px; height: 76px; }
.sender-pic { width: 50px; height: 50px; flex: none; margin-right: 20px; }
.sender { flex: 1; }
.sender-line { font-size: 15.500px; color: #5e5e5e; line-height: 22px; white-space: nowrap; }
.sender-name { font-size: 17.500px; font-weight: 500; color: #1f1f1f; letter-spacing: .7px; }
.via { color: #222; }
.to-line { font-size: 15px; color: #5e5e5e; margin-top: 4px; display: flex; align-items: center; line-height: 20px; }
.to-caret { width: 0; height: 0; margin-left: 8px; border: 5px solid transparent; border-top-color: #5f6368; border-bottom-width: 0; }
.msg-meta { display: flex; align-items: flex-start; margin-top: -3px; }
.msg-date { font-size: 15.300px; color: #5e5e5e; margin: 4px 12px 0 0; line-height: 22px; white-space: nowrap; }
.slot50 { width: 50px; height: 30px; color: #444746; flex: none; }
.msg-body { padding: 14px 0 0 90px; font-family: "Liberation Sans", sans-serif; font-size: 16px; letter-spacing: .08px; color: #333; }
.msg-body p { margin: 0 0 22px; line-height: 19px; }
.items { border: 2px solid #000; border-spacing: 0; width: 154px; height: 162px; margin-top: 26px; table-layout: fixed; letter-spacing: 0; }
.items th, .items td { padding: 2px 0 0 1px; vertical-align: top; text-align: left; line-height: 22px; }
.items th { color: #222; }
.items th:first-child, .items td:first-child { width: 83px; }
.r-head { height: 27px; }
.r-one { height: 53px; }
.r-two { height: 78px; }
.actions { display: flex; gap: 10px; margin-top: 47px; }
.pill { height: 45px; border: 1px solid #747775; border-radius: 23px; background: #fff; display: flex; align-items: center; font: 400 17.500px Roboto, sans-serif; letter-spacing: .5px; color: #444746; padding: 0 0 0 22px; gap: 10px; }
.pill-reply { width: 130px; }
.pill-forward { width: 140px; padding-left: 16px; }
.pill-ico { width: 25px; height: 25px; flex: none; color: #5f6368; }

.rail { width: 70px; flex: none; display: flex; flex-direction: column; align-items: center; height: 811px; padding-left: 3px; }
.rail-slot { width: 67px; height: 70px; flex: none; display: flex; align-items: center; justify-content: center; }
.rail-ico { width: 24px; height: 25px; }
.cal-num { font: 700 10px Roboto, sans-serif; fill: #4285f4; text-anchor: middle; }
.rail-sep { width: 25px; height: 1px; background: #dadce0; margin-top: 21px; flex: none; }
.rail-plus { width: 30px; height: 30px; color: #1f1f1f; margin-top: 40px; flex: none; }
.rail-chev { width: 24px; height: 24px; color: #1f1f1f; margin-top: auto; margin-bottom: 22px; flex: none; }

/* Windows taskbar */
.taskbar { height: 60px; flex: none; background: #1d1d20; border-top: 1px solid #3c3c3e; display: flex; align-items: center; padding-bottom: 2px; color: #fff; font-family: "Open Sans", sans-serif; font-size: 14px; }
.weather { width: 577px; flex: none; display: flex; align-items: center; padding-left: 24px; }
.cloud { width: 32px; height: 24px; margin-right: 8px; flex: none; }
.weather-text { line-height: 20px; font-size: 14px; margin-top: -1px; }
.weather-sub { color: #cfcfcf; }
.tasks { display: flex; align-items: center; }
.winlogo { width: 29px; height: 29px; flex: none; }
.task-search { width: 125px; height: 40px; margin: 0 4.500px 0 17px; background: #2c2c31; border-radius: 20px; display: flex; align-items: center; justify-content: center; gap: 7px; font-size: 14px; }
.ts-ico { width: 20px; height: 20px; }
.app-slot { width: 55px; height: 57px; display: flex; align-items: center; justify-content: center; position: relative; flex: none; }
.app-ico { width: 30px; height: 30px; position: relative; }
.dot::after, .active-app::after { content: ""; position: absolute; left: 50%; bottom: 2px; width: 8px; height: 4px; margin-left: -4px; border-radius: 2px; background: #9a9a9a; }
.active-app::before { content: ""; position: absolute; left: 2.500px; top: 4px; width: 50px; height: 50px; border-radius: 5px; background: #2c2c31; }
.active-app::after { width: 20px; margin-left: -10px; background: #f4846b; }
.badge-yellow { position: absolute; right: 7px; top: 7px; width: 20px; height: 20px; border-radius: 50%; background: #ffc107; }
.badge-red { position: absolute; right: 7px; top: 7px; width: 20px; height: 20px; border-radius: 50%; background: #f4806a; color: #222; font-size: 13px; line-height: 20px; text-align: center; }
.help-q { font: 700 20px "Liberation Sans", sans-serif; fill: #fff; text-anchor: middle; }
.tray { margin-left: auto; display: flex; align-items: center; padding-right: 23px; }
.tray-slot { width: 30px; height: 30px; flex: none; }
.lang { width: 56px; text-align: center; line-height: 20px; font-size: 14.500px; }
.wifi { margin-left: 4px; }
.clock { width: 90px; text-align: right; line-height: 20px; font-size: 14.200px; white-space: nowrap; }
```
